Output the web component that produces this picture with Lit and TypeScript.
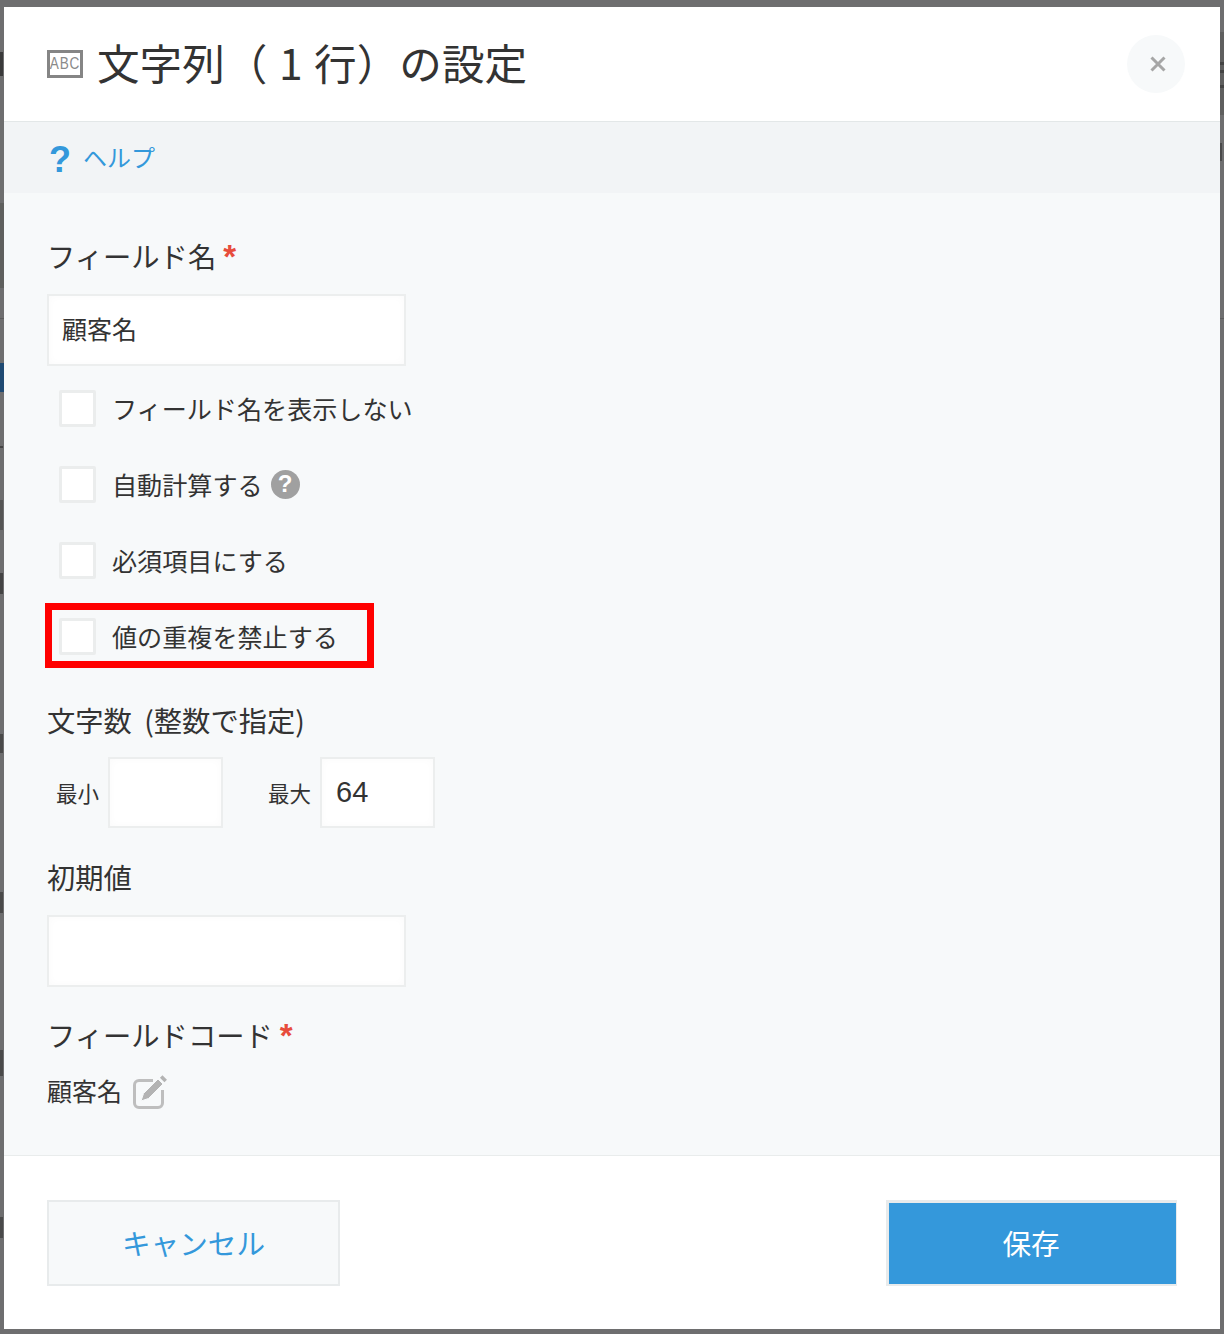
import { LitElement, html, css } from "lit";
import { customElement } from "lit/decorators.js";

// Fragments of the dimmed page that show in the slivers beside the dialog: [x, y, w, h, colour]
const BACKDROP: [number, number, number, number, string][] = [
  [0, 203, 4, 85, "#5f605e"],
  [0, 318, 4, 1, "#5c5c5c"],
  [0, 363, 4, 29, "#1f4a73"],
  [0, 52, 3, 24, "#3a3a3a"],
  [0, 446, 3, 2, "#444"],
  [0, 500, 3, 30, "#555"],
  [0, 573, 3, 21, "#444"],
  [0, 734, 3, 19, "#4a4a4a"],
  [0, 892, 3, 21, "#4a4a4a"],
  [0, 1050, 3, 26, "#4a4a4a"],
  [0, 1217, 3, 21, "#4a4a4a"],
  [1220, 32, 4, 83, "#5f5f5f"],
  [1220, 62, 4, 3, "#444"],
  [1220, 70, 4, 3, "#444"],
  [1220, 85, 4, 3, "#444"],
  [1220, 143, 2, 18, "#4a4a4a"],
  [1220, 318, 4, 1, "#5c5c5c"],
];

@customElement("app-root")
export class AppRoot extends LitElement {
  static styles = css`
    :host {
      display: block;
      position: relative;
      width: 1224px;
      height: 1334px;
      box-sizing: border-box;
      padding: 7px 4px 5px;
      background: #6e6e6f;
      font-family: "Noto Sans CJK JP", "Liberation Sans", sans-serif;
      color: #333;
      overflow: hidden;
    }
    .mark { position: absolute; }
    .card { height: 1322px; display: flex; flex-direction: column; background: #fff; position: relative; }
    .header {
      height: 115px; flex: none; box-sizing: border-box; border-bottom: 1px solid #e3e7e8;
      display: flex; align-items: center; padding: 0 35px 0 43px; background: #fff;
    }
    .abc {
      width: 36px; height: 28px; box-sizing: border-box; border: 3px solid #858585; background: #fff;
      display: flex; align-items: center; justify-content: center;
      font: 17px/22px "Liberation Sans Narrow", "Liberation Sans", sans-serif;
      color: #8a8a8a; margin-right: 15px; flex: none; overflow: hidden;
    }
    .abc span { display: block; transform: scaleX(0.8); white-space: nowrap; letter-spacing: 1px; }
    h1 {
      flex: 1; margin: -4px 0 0 -1px; font-size: 42.6px; font-weight: 400; line-height: 60px; white-space: pre;
      word-spacing: 2px;
    }
    .close {
      width: 58px; height: 58px; border-radius: 50%; background: #f7f9fa; border: 0; padding: 0 0 0 3px;
      display: flex; align-items: center; justify-content: center; box-sizing: border-box;
    }
    .help {
      height: 71px; flex: none; box-sizing: border-box; background: #f2f4f6; color: #3498db;
      display: flex; align-items: center; padding: 0 0 2px 45px; font-size: 24px;
    }
    .help .q { font: bold 36px/1 "Liberation Sans", sans-serif; width: 34px; margin-top: 6px; }
    .body { flex: 1; background: #f7f9fa; padding: 0 0 0 43px; box-sizing: border-box; }
    .label { height: 40px; font-size: 28.3px; line-height: 40px; white-space: nowrap; display: flex; word-spacing: 6px; }
    .label .req { color: #e74c3c; font: bold 33px/40px "Liberation Sans", sans-serif; margin-left: 7px; margin-top: 1px; }
    .input {
      box-sizing: border-box; background: #fff; border: 2px solid #eceeee;
      box-shadow: inset 0 0 8px rgba(0, 0, 0, 0.025);
      display: flex; align-items: center; font-size: 25px; padding: 0 13px 4px;
    }
    .wide { width: 359px; height: 72px; }
    .rows { margin-top: 4px; }
    .row { height: 76px; display: flex; align-items: center; padding-left: 12px; font-size: 25.1px; position: relative; white-space: nowrap; }
    .box { width: 37px; height: 37px; box-sizing: border-box; background: #fff; border: 3px solid #ebeded; border-radius: 2px; margin-right: 16px; flex: none; }
    .hint {
      width: 29px; height: 29px; border-radius: 50%; background: #a0a0a0; color: #fff; margin-left: 8px;
      display: flex; align-items: center; justify-content: center; font: bold 24px/1 "Liberation Sans", sans-serif;
    }
    .redbox {
      position: absolute; left: -2px; top: 5px; width: 329px; height: 65px; box-sizing: border-box;
      border: 7px solid #ff0000;
    }
    .range { display: flex; align-items: center; height: 71px; margin-top: 17px; font-size: 21.5px; }
    .range .lab { white-space: nowrap; }
    .range .input { width: 115px; height: 71px; font: 29px "Liberation Sans", sans-serif; padding: 0 0 0 14px; }
    .lab1 { margin-left: 9px; margin-right: 9px; }
    .lab2 { margin-left: 45px; margin-right: 9px; }
    .code { display: flex; align-items: flex-start; height: 34px; margin-top: 20px; font-size: 25px; }
    .code span { line-height: 30px; }
    .code svg { margin-left: 10px; overflow: visible; }
    .footer {
      height: 174px; flex: none; box-sizing: border-box; border-top: 1px solid #e9ecec; background: #fff;
      display: flex; justify-content: space-between; align-items: flex-start; padding: 44px 43px 0 43px;
    }
    .btn {
      height: 86px; box-sizing: border-box; font: 28.6px "Noto Sans CJK JP", sans-serif; display: flex;
      align-items: center; justify-content: center; padding: 0 0 2px;
    }
    .cancel { width: 293px; background: #f7f9fa; color: #3498db; border: 2px solid #e8ebec; }
    .save { width: 291px; background: #3498db; color: #fff; border: 2px solid #e8ebec; border-top-width: 3px; border-left-width: 3px; border-right-width: 1px; padding-right: 3px; }
  `;

  render() {
    return html`
      ${BACKDROP.map(
        ([x, y, w, h, c]) =>
          html`<i class="mark" style="left:${x}px;top:${y}px;width:${w}px;height:${h}px;background:${c}"></i>`
      )}
      <div class="card">
        <div class="header">
          <span class="abc"><span>ABC</span></span>
          <h1>文字列（ 1 行）の設定</h1>
          <button class="close" aria-label="close">
            <svg width="18" height="18" viewBox="0 0 18 18"><path d="M2.5 2.5 15.5 15.5M15.5 2.5 2.5 15.5" stroke="#a6a6a6" stroke-width="3" fill="none"/></svg>
          </button>
        </div>
        <div class="help"><span class="q">?</span><span>ヘルプ</span></div>
        <div class="body">
          <div class="label" style="margin-top:43px">フィールド名<span class="req">*</span></div>
          <div class="input wide" style="margin-top:18px">顧客名</div>
          <div class="rows">
            <div class="row"><span class="box"></span>フィールド名を表示しない</div>
            <div class="row"><span class="box"></span>自動計算する<span class="hint">?</span></div>
            <div class="row"><span class="box"></span>必須項目にする</div>
            <div class="row"><span class="box"></span>値の重複を禁止する<span class="redbox"></span></div>
          </div>
          <div class="label" style="margin-top:26px">文字数 (整数で指定)</div>
          <div class="range">
            <span class="lab lab1">最小</span><div class="input"></div>
            <span class="lab lab2">最大</span><div class="input">64</div>
          </div>
          <div class="label" style="margin-top:29px">初期値</div>
          <div class="input wide" style="margin-top:18px"></div>
          <div class="label" style="margin-top:28px">フィールドコード<span class="req">*</span></div>
          <div class="code">
            <span>顧客名</span>
            <svg width="36" height="34" viewBox="0 0 36 34" fill="none">
              <path d="M21 5.5H7A4.5 4.5 0 0 0 2.500 10V28A4.500 4.500 0 0 0 7 32.500H26A4.500 4.500 0 0 0 30.500 28V15" stroke="#bebebe" stroke-width="3"/>
              <path d="M9 26 11.500 18.500 26 4 31 9 16.500 23.500Z" fill="#b3b3b3" stroke="#f7f9fa" stroke-width="1"/>
              <path d="M29.200 1.500 33.700 6" stroke="#b3b3b3" stroke-width="3.500"/>
            </svg>
          </div>
        </div>
        <div class="footer">
          <button class="btn cancel">キャンセル</button>
          <button class="btn save">保存</button>
        </div>
      </div>
    `;
  }
}
